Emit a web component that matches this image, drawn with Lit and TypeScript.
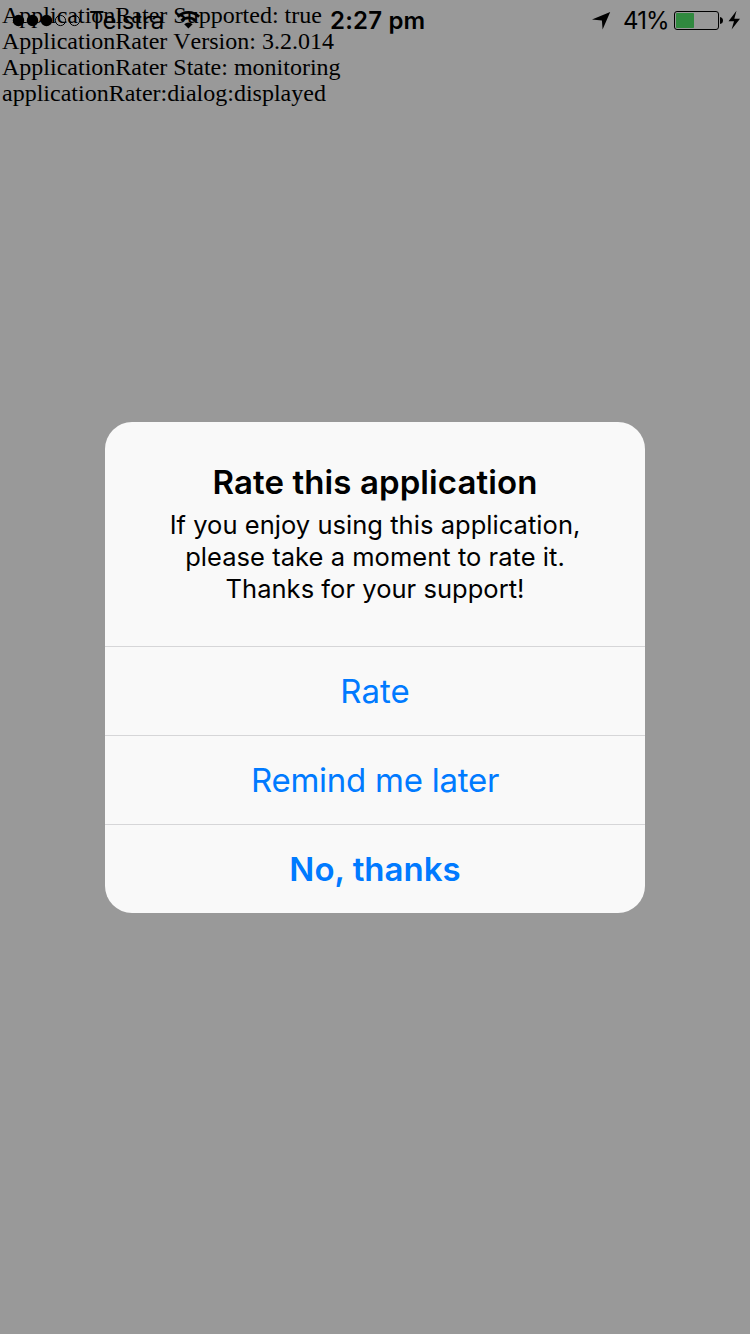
import { LitElement, html, css } from "lit";
import { customElement } from "lit/decorators.js";

@customElement("status-bar")
class StatusBar extends LitElement {
  static styles = css`
    :host {
      display: grid;
      grid-template-columns: 330px 1fr auto;
      height: 40px;
      color: #000;
      font: 24px/40px Inter, "Liberation Sans", sans-serif;
      white-space: nowrap;
    }
    .group { display: flex; height: 40px; }
    svg { display: block; flex: none; }
    .signal { width: 89px; height: 40px; }
    .carrier { width: 87px; line-height: 42px; letter-spacing: -0.2px; }
    .wifi { width: 25px; height: 40px; }
    .time { font-weight: 600; line-height: 42px; letter-spacing: 0.2px; }
    .percent { width: 51px; line-height: 42px; letter-spacing: -0.9px; }
    .arrow { width: 31px; height: 40px; overflow: visible; }
    .battery { width: 76px; height: 40px; }
  `;

  render() {
    return html`
      <div class="group">
        <svg class="signal" viewBox="0 0 89 40">
          <circle cx="18.5" cy="20.5" r="5.7" />
          <circle cx="32.5" cy="20.5" r="5.7" />
          <circle cx="46.5" cy="20.5" r="5.7" />
          <circle cx="60.5" cy="20.5" r="5.1" fill="none" stroke="#000" stroke-width="1" />
          <circle cx="74.5" cy="20.5" r="5.1" fill="none" stroke="#000" stroke-width="1" />
        </svg>
        <span class="carrier">Telstra</span>
        <svg class="wifi" viewBox="0 0 25 40">
          <path d="M1.7 16.7a15.2 15.2 0 0 1 21.4 0M5.4 20.7a10 10 0 0 1 14 0" fill="none" stroke="#000" stroke-width="2.8" />
          <path d="M8.2 24.2a6 6 0 0 1 8.4 0L12.4 28.4Z" />
        </svg>
      </div>
      <span class="time">2:27 pm</span>
      <div class="group">
        <svg class="arrow" viewBox="0 0 31 40">
          <path d="M18.2 12 10.6 29.6 9.9 20.4 0 19.6Z" />
        </svg>
        <span class="percent">41%</span>
        <svg class="battery" viewBox="0 0 76 40">
          <rect x="0.5" y="11.5" width="44" height="18" rx="2.5" fill="none" stroke="#000" stroke-width="1" />
          <rect x="2" y="13" width="18" height="15" rx="0.8" fill="#30893f" />
          <path d="M46 17q3 0.5 3 3.5t-3 3.5Z" />
          <path d="M62.5 10.7 54.5 21.2H60L57.6 29.5 66 18.8H60.3Z" />
        </svg>
      </div>
    `;
  }
}

@customElement("rate-dialog")
class RateDialog extends LitElement {
  static styles = css`
    :host {
      display: flex;
      flex-direction: column;
      width: 540px;
      height: 491px;
      border-radius: 27px;
      overflow: hidden;
      background: #f9f9f9;
      color: #000;
      font-family: Inter, "Liberation Sans", sans-serif;
      text-align: center;
    }
    .message { height: 224px; box-sizing: border-box; padding-top: 40px; }
    .title { margin: 0; font-size: 33px; line-height: 40px; font-weight: 600; letter-spacing: 0.1px; }
    .copy { margin: 7px 0 0; font-size: 25.5px; line-height: 32px; letter-spacing: 0.04px; }
    .action {
      display: block;
      height: 89px;
      box-sizing: border-box;
      border: 0;
      border-top: 1px solid #d6d6d8;
      padding: 0;
      background: none;
      color: #007aff;
      font: 400 33px/88px Inter, "Liberation Sans", sans-serif;
    }
    .tight { letter-spacing: -0.25px; }
    .strong { font-weight: 600; }
  `;

  render() {
    return html`
      <div class="message">
        <h1 class="title">Rate this application</h1>
        <p class="copy">
          If you enjoy using this application,<br />please take a moment to rate it.<br />Thanks for your support!
        </p>
      </div>
      <button class="action">Rate</button>
      <button class="action tight">Remind me later</button>
      <button class="action strong">No, thanks</button>
    `;
  }
}

@customElement("app-root")
class AppRoot extends LitElement {
  static styles = css`
    :host {
      display: block;
      position: relative;
      width: 750px;
      height: 1334px;
      overflow: hidden;
      background: #999;
    }
    .log {
      padding: 2px;
      color: #000;
      font: 24px/26px "Liberation Serif", serif;
      font-kerning: none;
    }
    .status { position: absolute; inset: 0 0 auto; }
    .overlay {
      position: absolute;
      inset: 0;
      display: flex;
      align-items: center;
      justify-content: center;
    }
  `;

  private lines = [
    "ApplicationRater Supported: true",
    "ApplicationRater Version: 3.2.014",
    "ApplicationRater State: monitoring",
    "applicationRater:dialog:displayed",
  ];

  render() {
    return html`
      <div class="log">${this.lines.map((line) => html`<div>${line}</div>`)}</div>
      <status-bar class="status"></status-bar>
      <div class="overlay"><rate-dialog></rate-dialog></div>
    `;
  }
}
